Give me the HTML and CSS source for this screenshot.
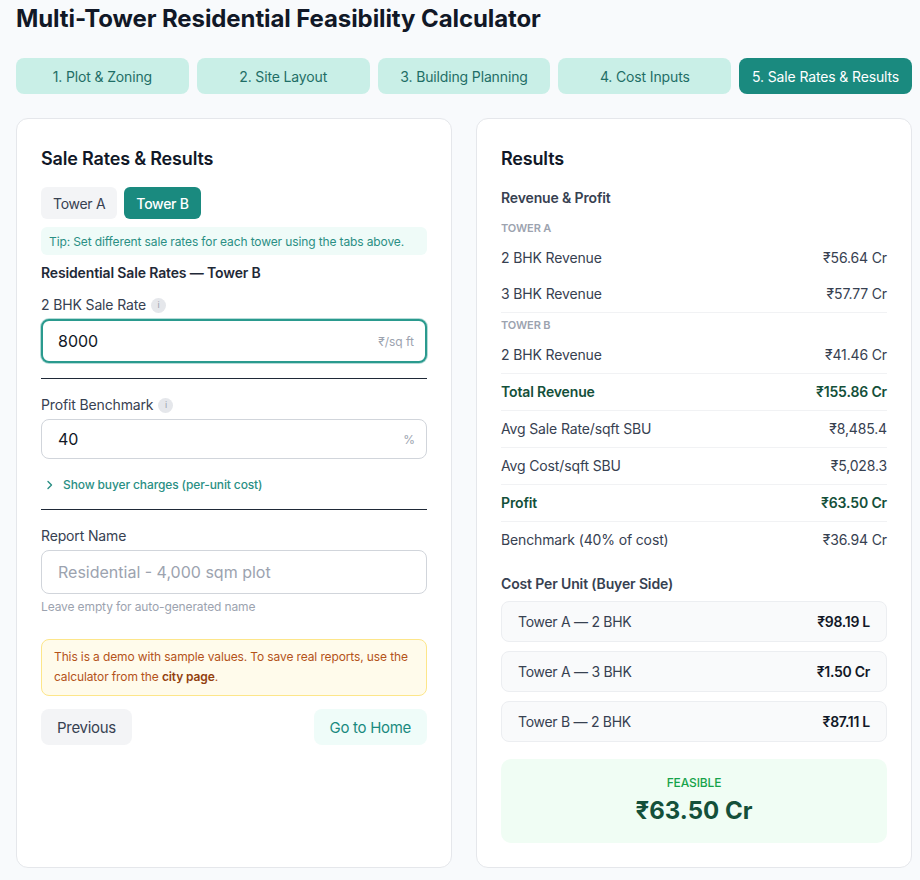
FILE: index.html
```html
<!DOCTYPE html>
<html lang="en">
<head>
  <meta charset="UTF-8" />
  <meta name="viewport" content="width=device-width, initial-scale=1.0"/>
  <title>Multi-Tower Residential Feasibility Calculator</title>
  <link rel="stylesheet" href="styles.css">
</head>
<body>

  <div class="page">
    <h1 class="page-title">Multi-Tower Residential Feasibility Calculator</h1>

    <nav class="steps">
      <a href="#">1. Plot &amp; Zoning</a>
      <a href="#">2. Site Layout</a>
      <a href="#">3. Building Planning</a>
      <a href="#">4. Cost Inputs</a>
      <a href="#" class="active">5. Sale Rates &amp; Results</a>
    </nav>

    <div class="columns">
      <!-- Inputs -->
      <section class="card">
        <h2>Sale Rates &amp; Results</h2>

        <div class="tower-tabs">
          <button>Tower A</button>
          <button class="active">Tower B</button>
        </div>

        <div class="tip">Tip: Set different sale rates for each tower using the tabs above.</div>

        <h3 class="sub-title">Residential Sale Rates — Tower B</h3>

        <div class="field">
          <label>2 BHK Sale Rate <span class="info">i</span></label>
          <div class="input-box focused">
            <input type="text" value="8000">
            <span class="suffix">₹/sq ft</span>
          </div>
        </div>

        <hr>

        <div class="field">
          <label>Profit Benchmark <span class="info">i</span></label>
          <div class="input-box short">
            <input type="text" value="40">
            <span class="suffix">%</span>
          </div>
        </div>

        <a href="#" class="toggle">
          <svg width="12" height="12" viewBox="0 0 12 12"><polyline points="4,2.5 7.5,6 4,9.5" fill="none" stroke="currentColor" stroke-width="1.4" stroke-linecap="round" stroke-linejoin="round"/></svg>
          Show buyer charges (per-unit cost)
        </a>

        <hr>

        <div class="field">
          <label>Report Name</label>
          <div class="input-box">
            <input type="text" placeholder="Residential - 4,000 sqm plot">
          </div>
          <div class="help">Leave empty for auto-generated name</div>
        </div>

        <div class="notice">
          This is a demo with sample values. To save real reports, use the calculator from the <strong>city page</strong>.
        </div>

        <div class="actions">
          <button class="btn-secondary">Previous</button>
          <button class="btn-home">Go to Home</button>
        </div>
      </section>

      <!-- Results -->
      <section class="card">
        <h2>Results</h2>

        <h4 class="group-title">Revenue &amp; Profit</h4>

        <div class="tower-label">Tower A</div>
        <div class="row plain"><span>2 BHK Revenue</span><span>₹56.64 Cr</span></div>
        <div class="row"><span>3 BHK Revenue</span><span>₹57.77 Cr</span></div>

        <div class="tower-label">Tower B</div>
        <div class="row"><span>2 BHK Revenue</span><span>₹41.46 Cr</span></div>

        <div class="row strong"><span>Total Revenue</span><span>₹155.86 Cr</span></div>
        <div class="row"><span>Avg Sale Rate/sqft SBU</span><span>₹8,485.4</span></div>
        <div class="row"><span>Avg Cost/sqft SBU</span><span>₹5,028.3</span></div>
        <div class="row strong"><span>Profit</span><span>₹63.50 Cr</span></div>
        <div class="row plain"><span>Benchmark (40% of cost)</span><span>₹36.94 Cr</span></div>

        <h4 class="group-title unit-title">Cost Per Unit (Buyer Side)</h4>

        <div class="units">
          <div class="unit"><span>Tower A — 2 BHK</span><strong>₹98.19 L</strong></div>
          <div class="unit"><span>Tower A — 3 BHK</span><strong>₹1.50 Cr</strong></div>
          <div class="unit"><span>Tower B — 2 BHK</span><strong>₹87.11 L</strong></div>
        </div>

        <div class="verdict">
          <div class="verdict-label">FEASIBLE</div>
          <div class="verdict-value">₹63.50 Cr</div>
        </div>
      </section>
    </div>
  </div>

</body>
</html>
```

FILE: styles.css
```css
:root {
  --teal: #1a8a7f;
  --teal-light: #c9efe7;
  --teal-text: #1f6e66;
  --border: #e5e7eb;
  --text: #374151;
  --dark: #111827;
  --green-dark: #14503a;
}

* {
  margin: 0;
  padding: 0;
  box-sizing: border-box;
  font-family: 'Inter', 'Noto Sans', sans-serif;
}

body {
  background-color: #f8fafc;
  color: var(--text);
}

.page {
  width: 912px;
  padding: 3px 0 0 16px;
}

.page-title {
  font-size: 24px;
  line-height: 32px;
  font-weight: 700;
  color: var(--dark);
  letter-spacing: -0.1px;
}

.steps {
  display: grid;
  grid-template-columns: repeat(5, 1fr);
  gap: 8px;
  margin-top: 23px;
}

.steps a {
  height: 36px;
  display: flex;
  align-items: center;
  justify-content: center;
  background-color: var(--teal-light);
  color: var(--teal-text);
  text-decoration: none;
  font-size: 14px;
  border-radius: 8px;
  letter-spacing: -0.01em;
}

.steps a.active {
  background-color: var(--teal);
  color: #fff;
}

.columns {
  display: grid;
  grid-template-columns: 436px 436px;
  gap: 24px;
  margin-top: 24px;
}

.card {
  background-color: #fff;
  border: 1px solid var(--border);
  border-radius: 12px;
  padding: 26px 24px 24px;
  height: 750px;
}

.card h2 {
  font-size: 18px;
  line-height: 28px;
  font-weight: 600;
  color: var(--dark);
  letter-spacing: -0.01em;
}

/* left column */

.tower-tabs {
  display: flex;
  gap: 7px;
  margin-top: 14px;
}

.tower-tabs button {
  height: 32px;
  padding: 0 12px;
  border: none;
  border-radius: 6px;
  background-color: #f3f4f6;
  color: var(--text);
  font-size: 14px;
  letter-spacing: -0.02em;
}

.tower-tabs button.active {
  background-color: var(--teal);
  color: #fff;
  font-weight: 500;
}

.tip {
  margin-top: 8px;
  padding: 0 8px;
  height: 28px;
  display: flex;
  align-items: center;
  background-color: #effbf8;
  border-radius: 6px;
  color: #2a8f84;
  font-size: 12px;
  letter-spacing: -0.01em;
}

.sub-title {
  margin-top: 8px;
  font-size: 14px;
  line-height: 20px;
  font-weight: 600;
  color: #1f2937;
  letter-spacing: -0.01em;
}

.field {
  margin-top: 12px;
}

.field label {
  display: flex;
  align-items: center;
  gap: 5px;
  font-size: 14px;
  line-height: 20px;
  color: var(--text);
  margin-bottom: 4px;
  letter-spacing: -0.01em;
}

.info {
  width: 15px;
  height: 15px;
  border-radius: 50%;
  background-color: #e5e7eb;
  color: #9ca3af;
  font-size: 9px;
  display: inline-flex;
  align-items: center;
  justify-content: center;
}

.input-box {
  display: flex;
  align-items: center;
  height: 44px;
  border: 1px solid #d1d5db;
  border-radius: 8px;
  padding: 0 11px 0 16px;
  background-color: #fff;
}

.input-box.short {
  height: 40px;
}

.input-box.focused {
  border: 2px solid #2a9a8e;
  box-shadow: 0 0 0 1px rgba(42, 154, 142, 0.35);
  padding-left: 15px;
}

.input-box input {
  flex: 1;
  min-width: 0;
  border: none;
  outline: none;
  background: transparent;
  font-size: 16px;
  color: var(--dark);
}

.input-box input::placeholder {
  color: #9ca3af;
}

.suffix {
  font-size: 12px;
  color: #9ca3af;
}

hr {
  border: none;
  border-top: 1px solid #1f2937;
  margin-top: 15px;
}

hr + .field {
  margin-top: 16px;
}

.toggle {
  display: flex;
  align-items: center;
  gap: 7px;
  margin-top: 18px;
  padding-left: 3px;
  font-size: 12px;
  line-height: 16px;
  color: #2a8f84;
  text-decoration: none;
  font-weight: 500;
  letter-spacing: -0.01em;
}

.toggle + hr {
  margin-top: 16px;
}

.help {
  margin-top: 5px;
  font-size: 12px;
  line-height: 16px;
  color: #9ca3af;
  letter-spacing: -0.01em;
}

.notice {
  margin-top: 24px;
  padding: 7px 12px 8px;
  background-color: #fffbeb;
  border: 1px solid #fde68a;
  border-radius: 8px;
  color: #b4531a;
  font-size: 12px;
  line-height: 20px;
  letter-spacing: -0.01em;
}

.notice strong {
  color: #92400e;
  font-weight: 600;
}

.actions {
  display: flex;
  justify-content: space-between;
  margin-top: 13px;
}

.actions button {
  height: 36px;
  padding: 0 16px;
  border: none;
  border-radius: 8px;
  font-size: 15px;
  letter-spacing: -0.02em;
}

.btn-secondary {
  background-color: #f3f4f6;
  color: var(--text);
}

.btn-home {
  background-color: #effcf9;
  color: var(--teal);
}

/* right column */

.group-title {
  margin-top: 15px;
  font-size: 14px;
  line-height: 20px;
  font-weight: 600;
  color: var(--text);
  letter-spacing: -0.01em;
}

.tower-label {
  margin-top: 12px;
  font-size: 11px;
  line-height: 16px;
  font-weight: 600;
  color: #9ca3af;
  text-transform: uppercase;
  letter-spacing: -0.01em;
}

.tower-label + .row,
.tower-label + .row.plain {
  margin-top: 4px;
}

.row + .tower-label {
  margin-top: 4px;
}

.row {
  display: flex;
  justify-content: space-between;
  padding: 8px 0;
  font-size: 14px;
  line-height: 20px;
  color: var(--text);
  border-bottom: 1px solid #f1f2f4;
  letter-spacing: -0.01em;
}

.row.plain {
  border-bottom: none;
}

.row.strong {
  font-weight: 600;
  color: var(--green-dark);
}

.unit-title {
  margin-top: 16px;
}

.units {
  display: flex;
  flex-direction: column;
  gap: 9px;
  margin-top: 7px;
}

.unit {
  display: flex;
  justify-content: space-between;
  align-items: center;
  height: 41px;
  padding: 0 16px;
  background-color: #f9fafb;
  border: 1px solid #eceef1;
  border-radius: 8px;
  font-size: 14px;
  color: var(--text);
  letter-spacing: -0.02em;
}

.unit strong {
  font-weight: 600;
  color: var(--dark);
}

.verdict {
  margin-top: 17px;
  padding: 16px;
  background-color: #f0fdf4;
  border-radius: 10px;
  text-align: center;
}

.verdict-label {
  font-size: 12px;
  line-height: 16px;
  color: #16a34a;
  font-weight: 500;
  letter-spacing: -0.01em;
}

.verdict-value {
  margin-top: 4px;
  font-size: 24px;
  line-height: 32px;
  font-weight: 700;
  color: var(--green-dark);
}
```
